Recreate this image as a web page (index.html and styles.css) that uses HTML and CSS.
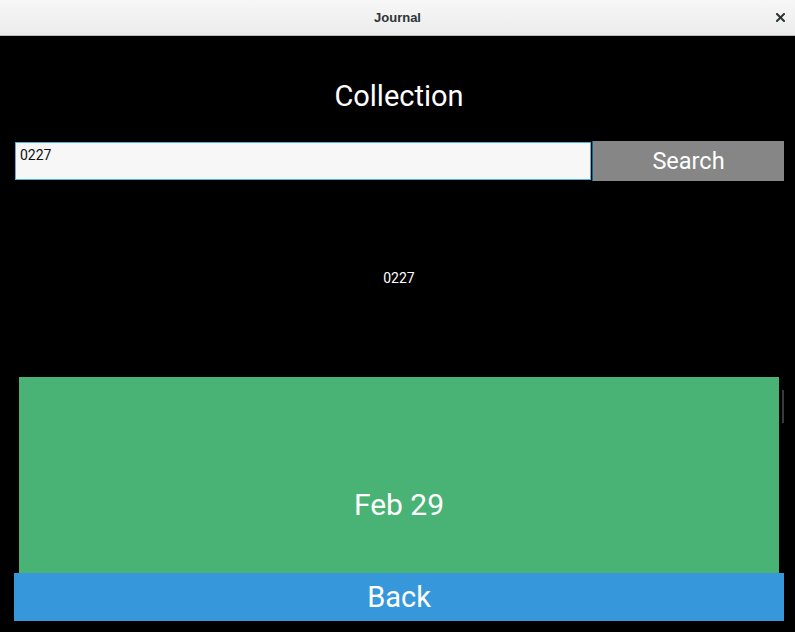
FILE: index.html
```html
<!DOCTYPE html>
<html lang="en">
<head>
<meta charset="utf-8">
<title>Journal</title>
<link rel="stylesheet" href="styles.css">
</head>
<body>
<div class="window">
  <header class="titlebar">
    <span class="title">Journal</span>
    <button class="close" aria-label="Close">
      <svg width="9" height="9" viewBox="0 0 9 9"><path d="M1 1L8 8M8 1L1 8" stroke="#2e3436" stroke-width="2" stroke-linecap="square"/></svg>
    </button>
  </header>
  <main class="main">
    <h1 class="heading">Collection</h1>
    <div class="search-row">
      <input class="search-input" type="text" value="0227">
      <button class="search-btn">Search</button>
    </div>
    <div class="query-label">0227</div>
    <div class="list">
      <div class="entry"><span class="entry-date">Feb 29</span></div>
      <div class="scrollbar"></div>
    </div>
    <button class="back-btn">Back</button>
  </main>
</div>
</body>
</html>
```
FILE: styles.css
```css
html, body {
  margin: 0;
  padding: 0;
  background: #000;
  width: 795px;
  height: 632px;
  overflow: hidden;
}
.window {
  display: flex;
  flex-direction: column;
  height: 632px;
  font-family: Roboto, "Liberation Sans", sans-serif;
}
.titlebar {
  position: relative;
  height: 35px;
  flex: none;
  border-bottom: 1px solid #bdbdbd;
  background: linear-gradient(#f7f7f7, #ececec);
  display: flex;
  align-items: center;
  justify-content: center;
}
.title {
  font-family: "Liberation Sans", Arial, sans-serif;
  font-weight: bold;
  font-size: 13px;
  color: #2e3436;
}
.close {
  position: absolute;
  right: 10px;
  top: 13px;
  width: 9px;
  height: 9px;
  padding: 0;
  border: 0;
  background: none;
  display: block;
}
.close svg { display: block; }
.main {
  padding: 0 11px 0 14px;
  display: flex;
  flex-direction: column;
}
.heading {
  margin: 40px 0 0;
  height: 40px;
  line-height: 40px;
  font-size: 29px;
  font-weight: 400;
  color: #fff;
  text-align: center;
}
.search-row {
  margin-top: 25px;
  display: flex;
  height: 40px;
}
.search-input {
  flex: 1;
  margin: 1px;
  box-sizing: border-box;
  height: 38px;
  border: 1px solid #5ab0dc;
  background: #f7f7f7;
  font-family: Roboto, sans-serif;
  font-size: 14px;
  color: #111;
  padding: 0 4px 12px;
  outline: none;
}
.search-btn {
  width: 192px;
  flex: none;
  border: 0;
  border-left: 1px solid #1e5e7e;
  background: #868686;
  color: #fff;
  font-family: Roboto, sans-serif;
  font-size: 23.5px;
  padding: 0;
}
.query-label {
  margin-top: 87px;
  height: 20px;
  line-height: 20px;
  text-align: center;
  color: #fff;
  font-size: 14px;
}
.list {
  position: relative;
  margin-top: 89px;
  height: 196px;
}
.entry {
  margin: 0 5px;
  height: 196px;
  background: #49b375;
  box-sizing: border-box;
  padding-top: 111px;
  text-align: center;
}
.entry-date {
  display: block;
  line-height: 34px;
  font-size: 30px;
  color: #fff;
}
.scrollbar {
  position: absolute;
  right: 0;
  top: 13px;
  width: 2px;
  height: 33px;
  background: #3a3a3a;
}
.back-btn {
  height: 48px;
  border: 0;
  background: #3698db;
  color: #fff;
  font-family: Roboto, sans-serif;
  font-size: 29px;
  padding: 0;
}
```
